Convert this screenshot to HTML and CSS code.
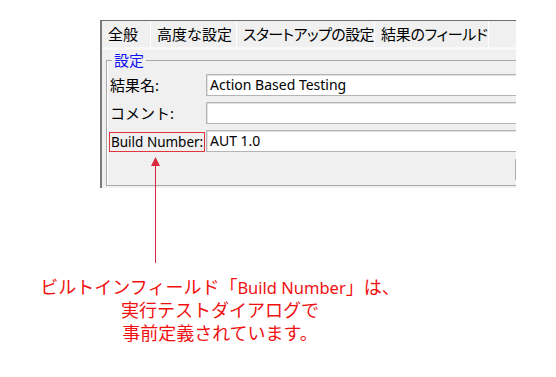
FILE: index.html
```html
<!DOCTYPE html>
<html lang="ja">
<head>
  <meta charset="UTF-8" />
  <title>結果のフィールド</title>
  <link rel="stylesheet" href="styles.css">
</head>
<body>
  <div class="window">
    <div class="tabs">
      <div class="tab tab-general">全般</div>
      <div class="tab tab-advanced">高度な設定</div>
      <div class="tab tab-startup">スタートアップの設定</div>
      <div class="tab tab-fields">結果のフィールド</div>
    </div>
    <div class="strip"></div>
    <fieldset class="group">
      <legend>設定</legend>
      <div class="rows">
        <div class="label">結果名:</div>
        <div class="field">Action Based Testing</div>
        <div class="label">コメント:</div>
        <div class="field"></div>
        <div class="label"><span class="mark">Build Number:</span></div>
        <div class="field">AUT 1.0</div>
      </div>
      <div class="btn"></div>
    </fieldset>
  </div>

  <svg class="arrow" width="11" height="108" viewBox="0 0 11 108">
    <line x1="5.5" y1="6" x2="5.5" y2="106" stroke="#d8283c" stroke-width="1" />
    <polygon points="5.5,0 10,9 1,9" fill="#d8283c" />
  </svg>

  <p class="caption">ビルトインフィールド「<span class="term">Build Number</span>」は、<br>実行テストダイアログで<br>事前定義されています。</p>
</body>
</html>
```

FILE: styles.css
```css
body {
  margin: 0;
  background: #fff;
  font-family: "Noto Sans", "Noto Sans CJK JP", sans-serif;
  color: #000;
}
.window {
  margin: 20px 0 0 100px;
  width: 414px;
  height: 167px;
  background: #f0f0f0;
  border-top: 1px solid #6e6e6e;
  border-left: 2px solid #7a7a7a;
  overflow: hidden;
}
.tabs {
  display: flex;
  height: 26px;
}
.tab {
  flex: none;
  font-size: 15px;
  line-height: 26px;
  padding: 0 5px 0 6px;
  border-right: 1px solid #fff;
  white-space: nowrap;
}
.tab-general { width: 37px; }
.tab-advanced { width: 74px; }
.tab-startup {
  width: 126px;
  font-feature-settings: "palt";
  letter-spacing: -0.6px;
}
.tab-fields {
  width: 102px;
  font-feature-settings: "palt";
  letter-spacing: -0.3px;
}
.strip {
  height: 3px;
  background: #f8f8f8;
  border-bottom: 1px solid #ececec;
}
.group {
  margin: 1px 0 0 4px;
  padding: 0 0 5px 0;
  width: 430px;
  border: 1px solid #a8a8a8;
  box-shadow: inset 1px 0 0 #fff;
}
.group legend {
  margin-left: 5px;
  padding: 0 2px;
  font-size: 15px;
  line-height: 16px;
  color: #1010f0;
}
.rows {
  display: grid;
  grid-template-columns: 99px 1fr;
  grid-auto-rows: 22px;
  row-gap: 6px;
  margin-top: 6px;
}
.label {
  font-size: 15px;
  line-height: 22px;
  padding-left: 3px;
  white-space: nowrap;
}
.mark {
  display: inline-block;
  margin-left: -1px;
  padding: 0 1px;
  font-size: 13.5px;
  line-height: 18px;
  border: 1px solid #e0343f;
}
.field {
  background: #fff;
  border: 1px solid #b4b4b4;
  box-shadow: inset 1px 1px 0 #e2e2e2;
  font-size: 14px;
  line-height: 20px;
  padding-left: 3px;
}
.btn {
  margin: 7px 0 0 408px;
  width: 30px;
  height: 19px;
  background: #e1e1e1;
  border: 1px solid #adadad;
}
.arrow {
  position: absolute;
  left: 150px;
  top: 157px;
}
.caption {
  width: 440px;
  margin: 88px 0 0;
  text-align: center;
  font-size: 18px;
  line-height: 23px;
  color: #f01010;
}
.caption .term {
  font-size: 16.5px;
}
```
